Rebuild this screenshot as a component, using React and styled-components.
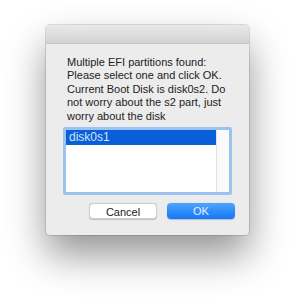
import React from 'react';
import styled, { createGlobalStyle } from 'styled-components';

const GlobalStyle = createGlobalStyle`
    html, body {
        margin: 0;
        padding: 0;
        background: #ffffff;
        font-family: "Liberation Sans", Arial, sans-serif;
    }
`;

const Stage = styled.div`
    width: 295px;
    height: 300px;
    padding: 25px 0 0 46px;
    box-sizing: border-box;
`;

const Window = styled.div`
    width: 203px;
    height: 210px;
    background: #ececec;
    border-radius: 4px;
    box-shadow: 0 0 0 1px rgba(0,0,0,0.12), 0 20px 38px rgba(0,0,0,0.42);
    display: flex;
    flex-direction: column;
    overflow: hidden;
`;

const TitleBar = styled.div`
    height: 18px;
    background: linear-gradient(#e9e9e9, #d2d2d2);
    border-bottom: 1px solid #c4c4c4;
`;

const Body = styled.div`
    flex: 1;
    display: flex;
    flex-direction: column;
    padding: 12px 14px 16px 17px;
`;

const Message = styled.p`
    margin: 0 0 4px 4px;
    font-size: 11px;
    line-height: 13.4px;
    color: #222;
`;

const ListBox = styled.div`
    height: 62px;
    border: 3px solid #9cc2f2;
    border-radius: 2px;
    background: #fff;
    display: flex;
    margin-right: 3px;
`;

const Rows = styled.div`
    flex: 1;
`;

const Row = styled.div`
    height: 15px;
    padding-left: 3px;
    font-size: 12px;
    line-height: 15px;
    color: ${p => (p.$selected ? '#d6e4fb' : '#222')};
    background: ${p => (p.$selected ? '#0a5fd8' : 'transparent')};
`;

const Scroll = styled.div`
    width: 12px;
    border-left: 1px solid #e3e3e3;
    background: #fafafa;
`;

const Buttons = styled.div`
    margin-top: auto;
    display: flex;
    justify-content: flex-end;
    gap: 10px;
`;

const Button = styled.div`
    width: 68px;
    height: 16px;
    box-sizing: border-box;
    border-radius: 4px;
    font-size: 11px;
    line-height: 16px;
    text-align: center;
    color: ${p => (p.$primary ? '#e9f1ff' : '#222')};
    background: ${p => (p.$primary ? 'linear-gradient(#4ea4ff, #1478f5)' : '#fff')};
    border: ${p => (p.$primary ? 'none' : '1px solid #cfcfcf')};
    box-shadow: 0 0.5px 1px rgba(0,0,0,0.2);
`;

const App = () => {
    return (
        <>
            <GlobalStyle />
            <Stage>
                <Window>
                    <TitleBar />
                    <Body>
                        <Message>
                            Multiple EFI partitions found: Please select one and click OK.
                            Current Boot Disk is disk0s2. Do not worry about the s2 part, just
                            worry about the disk
                        </Message>
                        <ListBox>
                            <Rows>
                                <Row $selected>disk0s1</Row>
                            </Rows>
                            <Scroll />
                        </ListBox>
                        <Buttons>
                            <Button>Cancel</Button>
                            <Button $primary>OK</Button>
                        </Buttons>
                    </Body>
                </Window>
            </Stage>
        </>
    );
}

export default App;
